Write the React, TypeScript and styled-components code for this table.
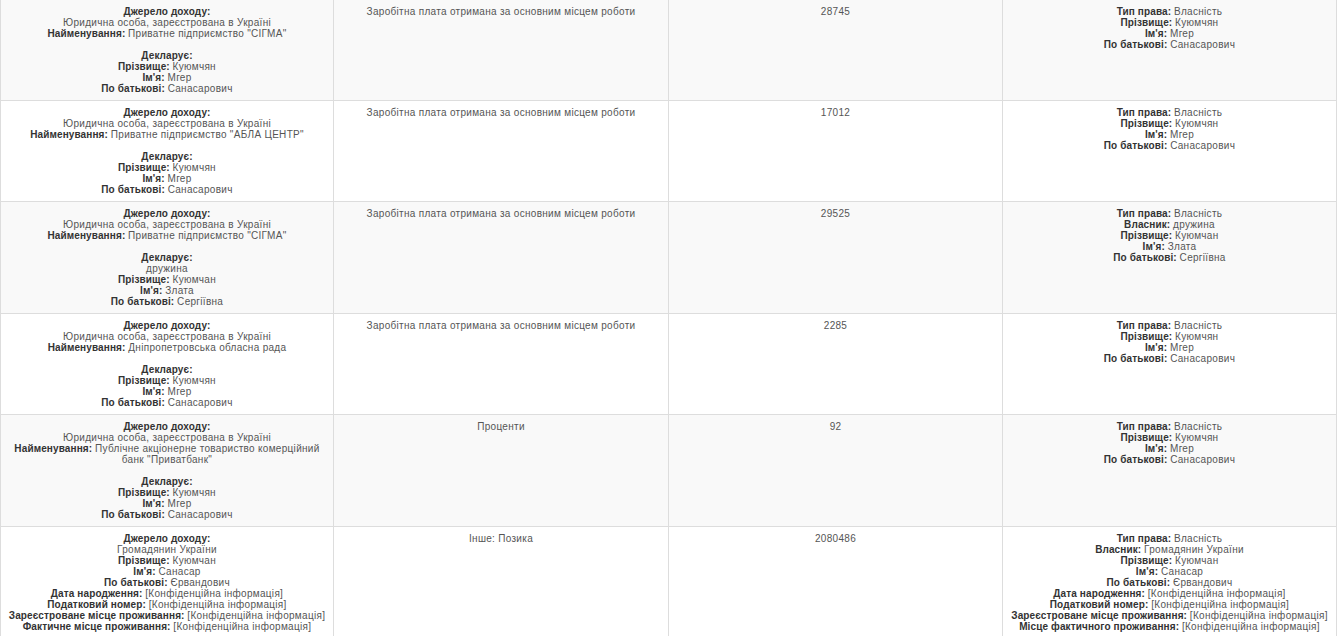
import styled, { createGlobalStyle } from "styled-components";

type Line = [string, string?] | null;

interface IncomeRow {
  source: Line[];
  kind: string;
  amount: string;
  owner: Line[];
}

const GlobalStyle = createGlobalStyle`
  body {
    margin: 0;
    background: #fff;
    font-family: "Liberation Sans", Arial, sans-serif;
  }
`;

const CONF = "[Конфіденційна інформація]";

const mger: Line[] = [
  ["Прізвище:", "Куюмчян"],
  ["Ім'я:", "Мгер"],
  ["По батькові:", "Санасарович"],
];

const legal = (name: string, declarant: Line[]): Line[] => [
  ["Джерело доходу:"],
  [" ", "Юридична особа, зареєстрована в Україні"],
  ["Найменування:", name],
  null,
  ["Декларує:"],
  ...declarant,
];

const rows: IncomeRow[] = [
  {
    source: legal('Приватне підприємство "СІГМА"', mger),
    kind: "Заробітна плата отримана за основним місцем роботи",
    amount: "28745",
    owner: [["Тип права:", "Власність"], ...mger],
  },
  {
    source: legal('Приватне підприємство "АБЛА ЦЕНТР"', mger),
    kind: "Заробітна плата отримана за основним місцем роботи",
    amount: "17012",
    owner: [["Тип права:", "Власність"], ...mger],
  },
  {
    source: legal('Приватне підприємство "СІГМА"', [
      [" ", "дружина"],
      ["Прізвище:", "Куюмчан"],
      ["Ім'я:", "Злата"],
      ["По батькові:", "Сергіївна"],
    ]),
    kind: "Заробітна плата отримана за основним місцем роботи",
    amount: "29525",
    owner: [
      ["Тип права:", "Власність"],
      ["Власник:", "дружина"],
      ["Прізвище:", "Куюмчан"],
      ["Ім'я:", "Злата"],
      ["По батькові:", "Сергіївна"],
    ],
  },
  {
    source: legal("Дніпропетровська обласна рада", mger),
    kind: "Заробітна плата отримана за основним місцем роботи",
    amount: "2285",
    owner: [["Тип права:", "Власність"], ...mger],
  },
  {
    source: legal(
      'Публічне акціонерне товариство комерційний банк "Приватбанк"',
      mger
    ),
    kind: "Проценти",
    amount: "92",
    owner: [["Тип права:", "Власність"], ...mger],
  },
  {
    source: [
      ["Джерело доходу:"],
      [" ", "Громадянин України"],
      ["Прізвище:", "Куюмчан"],
      ["Ім'я:", "Санасар"],
      ["По батькові:", "Єрвандович"],
      ["Дата народження:", CONF],
      ["Податковий номер:", CONF],
      ["Зареєстроване місце проживання:", CONF],
      ["Фактичне місце проживання:", CONF],
    ],
    kind: "Інше: Позика",
    amount: "2080486",
    owner: [
      ["Тип права:", "Власність"],
      ["Власник:", "Громадянин України"],
      ["Прізвище:", "Куюмчан"],
      ["Ім'я:", "Санасар"],
      ["По батькові:", "Єрвандович"],
      ["Дата народження:", CONF],
      ["Податковий номер:", CONF],
      ["Зареєстроване місце проживання:", CONF],
      ["Місце фактичного проживання:", CONF],
    ],
  },
];

const Details = ({ lines }: { lines: Line[] }) => (
  <>
    {lines.map((line, i) =>
      line === null ? (
        <Blank key={i} />
      ) : (
        <TextLine key={i}>
          {line[0].trim() && <Label>{line[0]}</Label>}
          {line[1] && (line[0].trim() ? " " : "")}
          {line[1] && <Value>{line[1]}</Value>}
        </TextLine>
      )
    )}
  </>
);

const App = () => (
  <>
    <GlobalStyle />
    <Table>
      <colgroup>
        <col style={{ width: 333 }} />
        <col style={{ width: 335 }} />
        <col style={{ width: 334 }} />
        <col style={{ width: 334 }} />
      </colgroup>
      <tbody>
        {rows.map((row, i) => (
          <Row key={i} $striped={i % 2 === 0}>
            <Cell>
              <Details lines={row.source} />
            </Cell>
            <Cell>
              <Value>{row.kind}</Value>
            </Cell>
            <Cell>
              <Value>{row.amount}</Value>
            </Cell>
            <Cell>
              <Details lines={row.owner} />
            </Cell>
          </Row>
        ))}
      </tbody>
    </Table>
  </>
);

const Table = styled.table`
  width: 1336px;
  margin-top: -1px;
  table-layout: fixed;
  border-collapse: collapse;
  font-size: 10px;
  line-height: 11px;
`;

const Row = styled.tr<{ $striped: boolean }>`
  background: ${(p) => (p.$striped ? "#f9f9f9" : "#ffffff")};
`;

const Cell = styled.td`
  border: 1px solid #dddddd;
  padding: 6px 4px 6px;
  vertical-align: top;
  text-align: center;
`;

const TextLine = styled.div`
  min-height: 11px;
`;

const Blank = styled.div`
  height: 11px;
`;

const Label = styled.b`
  color: #333333;
  font-weight: bold;
  letter-spacing: 0.12px;
`;

const Value = styled.span`
  color: #555555;
  letter-spacing: 0.3px;
`;

export default App;
